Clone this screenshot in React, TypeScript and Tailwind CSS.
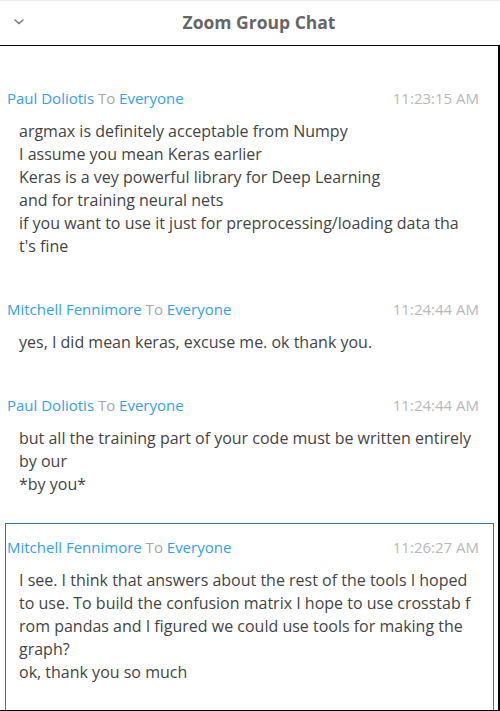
import React from "react";

type Msg = { from: string; time: string; lines: string[]; focused?: boolean };

const messages: Msg[] = [
  {
    from: "Paul Doliotis",
    time: "11:23:15 AM",
    lines: [
      "argmax is definitely acceptable from Numpy",
      "I assume you mean Keras earlier",
      "Keras is a vey powerful library for Deep Learning",
      "and for training neural nets",
      "if you want to use it just for preprocessing/loading data tha",
      "t's fine",
    ],
  },
  {
    from: "Mitchell Fennimore",
    time: "11:24:44 AM",
    lines: ["yes, I did mean keras, excuse me. ok thank you."],
  },
  {
    from: "Paul Doliotis",
    time: "11:24:44 AM",
    lines: [
      "but all the training part of your code must be written entirely",
      "by our",
      "*by you*",
    ],
  },
  {
    from: "Mitchell Fennimore",
    time: "11:26:27 AM",
    focused: true,
    lines: [
      "I see. I think that answers about the rest of the tools I hoped",
      "to use. To build the confusion matrix I hope to use crosstab f",
      "rom pandas and I figured we could use tools for making the",
      "graph?",
      "ok, thank you so much",
    ],
  },
];

export default function App() {
  return (
    <div
      className="w-[500px] h-[711px] bg-white overflow-hidden flex flex-col border-t border-[#ebebeb]"
      style={{ fontFamily: '"Open Sans", "Noto Sans", sans-serif' }}
    >
      <div className="relative h-[44px] flex items-center justify-center pl-[18px] shrink-0">
        <svg
          className="absolute left-[13px] top-[17px]"
          width="12"
          height="8"
          viewBox="0 0 12 8"
        >
          <polyline
            points="2,2 6,5.5 10,2"
            fill="none"
            stroke="#777"
            strokeWidth="1.5"
            strokeLinecap="round"
          />
        </svg>
        <div className="text-[17.5px] font-bold text-[#666] leading-none">
          Zoom Group Chat
        </div>
      </div>
      <div className="flex-1 border-t border-b border-r-2 border-black overflow-hidden pt-[28px]">
        {messages.map((m, i) => (
          <div
            key={i}
            className={`ml-[5px] mr-[4px] border pt-[13px] pb-[26px] ${
              m.focused ? "border-[#2b78bf]" : "border-transparent"
            }`}
          >
            <div className="flex justify-between h-[20px] leading-[20px] text-[15px] pl-[1px] pr-[14px]">
              <div>
                <span className="text-[#33a0f2]">{m.from}</span>
                <span className="text-[#a6a6a6]"> To </span>
                <span className="text-[#33a0f2]">Everyone</span>
              </div>
              <div className="text-[#b8b8b8]">{m.time}</div>
            </div>
            <div className="mt-[12px] pl-[13px] text-[16px] leading-[23px] text-[#444] whitespace-pre">
              {m.lines.map((l, j) => (
                <div key={j}>{l}</div>
              ))}
            </div>
          </div>
        ))}
      </div>
    </div>
  );
}
